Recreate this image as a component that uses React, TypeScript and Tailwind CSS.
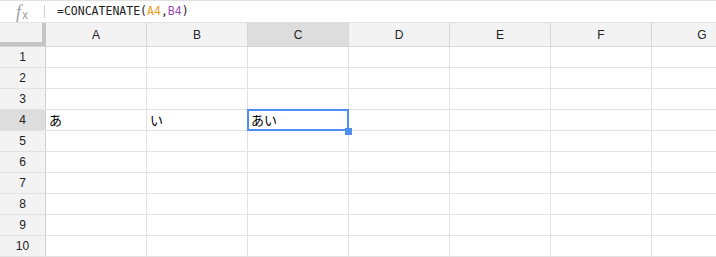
import React from "react";

const cols = ["A", "B", "C", "D", "E", "F", "G"];
const rows = [1, 2, 3, 4, 5, 6, 7, 8, 9, 10];

function cellText(r: number, c: string): string {
  if (r === 4 && c === "A") return "あ";
  if (r === 4 && c === "B") return "い";
  if (r === 4 && c === "C") return "あい";
  return "";
}

export default function App() {
  return (
    <div className="w-[716px] h-[257px] overflow-hidden bg-white font-['Liberation_Sans',Arial,sans-serif]">
      {/* Formula bar */}
      <div className="flex h-[23px] items-center border-y border-[#e1e1e1]">
        <div className="flex w-[44px] shrink-0 items-center justify-center text-[#a0a0a0]">
          <span className="font-['Liberation_Serif',serif] italic text-[18px] leading-none">f</span>
          <span className="font-['Liberation_Sans',sans-serif] text-[12px] leading-none mt-[6px] ml-[1px]">x</span>
        </div>
        <div className="h-[13px] w-px bg-[#d0d0d0]" />
        <div className="ml-[12px] font-['DejaVu_Sans_Mono',monospace] text-[11.5px] text-[#222] leading-none">
          =CONCATENATE(<span className="text-[#f29a1c]">A4</span>,<span className="text-[#9b4fb6]">B4</span>)
        </div>
      </div>

      {/* Column headers */}
      <div className="flex h-[24px] border-b border-[#d6d6d6] bg-[#f3f3f3]">
        <div className="w-[46px] shrink-0 border-r-4 border-b-4 border-[#c4c4c4] bg-[#f3f3f3]" />
        {cols.map((c) => (
          <div
            key={c}
            className={`flex w-[101px] shrink-0 items-center justify-center border-r border-[#d6d6d6] text-[12px] text-[#222] ${
              c === "C" ? "bg-[#dddddd]" : ""
            }`}
          >
            {c}
          </div>
        ))}
      </div>

      {/* Rows */}
      {rows.map((r) => (
        <div key={r} className="flex h-[21px] border-b border-[#e2e2e2]">
          <div
            className={`flex w-[46px] shrink-0 items-center justify-center border-r border-[#cfcfcf] text-[12px] text-[#222] ${
              r === 4 ? "bg-[#dddddd]" : "bg-[#f3f3f3]"
            }`}
          >
            {r}
          </div>
          {cols.map((c) => {
            const selected = r === 4 && c === "C";
            return (
              <div
                key={c}
                className="relative flex w-[101px] shrink-0 items-center border-r border-[#e2e2e2] pl-[3px] font-['Noto_Sans_CJK_JP',sans-serif] text-[13px] text-black"
              >
                {cellText(r, c)}
                {selected && (
                  <>
                    <div className="pointer-events-none absolute left-[-1px] top-[-1px] z-10 h-[22px] w-[102px] border-2 border-[#4d8ef2]" />
                    <div className="absolute right-[-4px] bottom-[-5px] z-20 h-[7px] w-[7px] bg-[#4d8ef2]" />
                  </>
                )}
              </div>
            );
          })}
        </div>
      ))}
    </div>
  );
}
